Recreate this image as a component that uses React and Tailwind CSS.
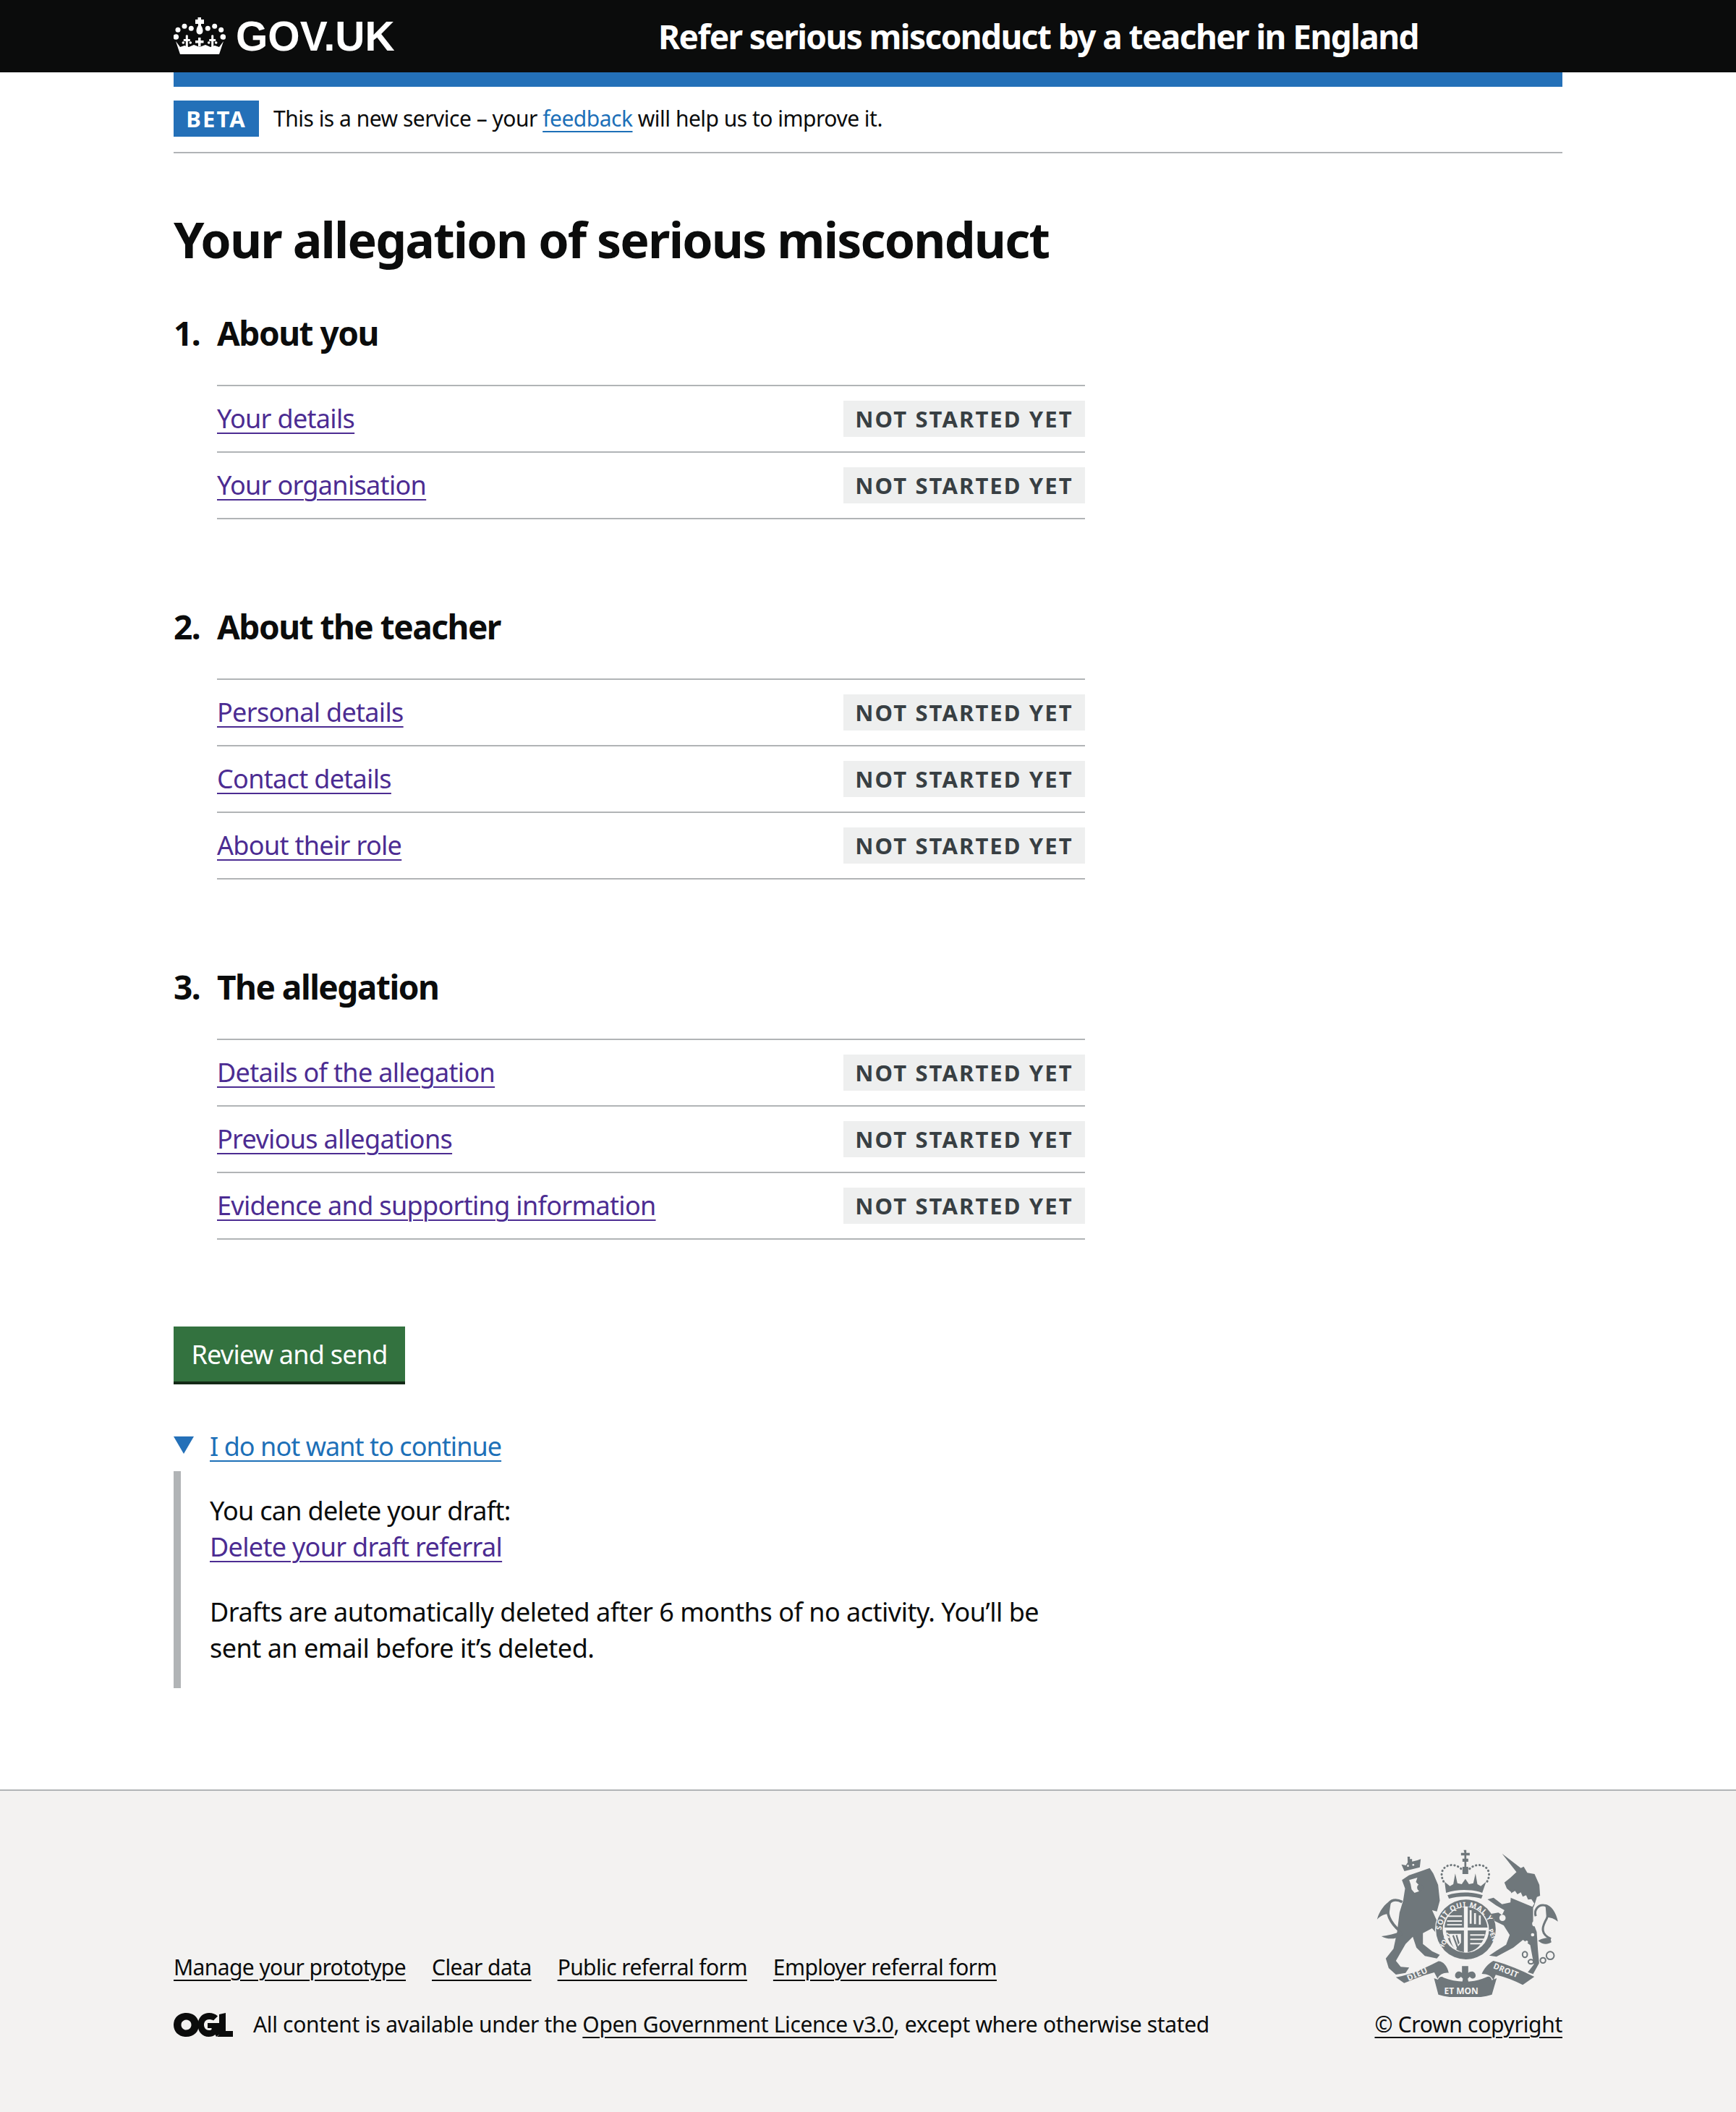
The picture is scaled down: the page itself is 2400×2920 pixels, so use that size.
import React from 'react';

const sections = [
  { num: '1.', title: 'About you', rows: ['Your details', 'Your organisation'] },
  { num: '2.', title: 'About the teacher', rows: ['Personal details', 'Contact details', 'About their role'] },
  { num: '3.', title: 'The allegation', rows: ['Details of the allegation', 'Previous allegations', 'Evidence and supporting information'] },
];

const footerLinks = ['Manage your prototype', 'Clear data', 'Public referral form', 'Employer referral form'];

const linkLine = 'underline decoration-2 underline-offset-[6px]';

const Fleur = ({ x }) => (
  <g transform={`translate(${x} 0)`}>
    <path d="M-1.500 26c1-1 2-1 3 0v5h3v3h-3v8h-3v-8h-3v-3h3z" />
    <circle cx="-5" cy="36" r="1.800" />
    <circle cx="5" cy="36" r="1.800" />
  </g>
);

const Crown = () => (
  <svg viewBox="0 0 72 54" className="w-[72px] h-[54px] shrink-0" fill="#ffffff">
    <path d="M33.500 1h4.500v3h4v6h-4v2.500c1.500 2 2.500 4.500 2.500 7 0 3-2 5-4.500 5s-4.500-2-4.500-5c0-2.500 1-5 2.500-7V10h-4V4h3.500z" />
    <circle cx="24.300" cy="16.300" r="3.500" /><circle cx="47.300" cy="16.300" r="3.500" />
    <circle cx="15" cy="13.300" r="3.500" /><circle cx="56.700" cy="13.300" r="3.500" />
    <circle cx="6" cy="18.300" r="3.500" /><circle cx="65.700" cy="18.300" r="3.500" />
    <circle cx="3.300" cy="28" r="3.800" /><circle cx="68.300" cy="28" r="3.800" />
    <path d="M3 34l6 8 6-2 6 2 7-3 8 3 8-3 7 3 6-2 6 2 6-8-6 18H9z" />
    <Fleur x={18.300} />
    <Fleur x={53.700} />
    <path d="M34 29h3.500v4h4v3.500h-4v5H34v-5h-4V33h4z" />
  </svg>
);

const Ogl = () => (
  <svg viewBox="0 0 82 33" className="w-[82px] h-[33px] shrink-0" fill="#0b0c0c">
    <path fillRule="evenodd" d="M17.500 0C28 0 35 7 35 16.500S28 33 17.500 33 0 26 0 16.500 7 0 17.500 0zm0 9.500c-4 0-7 3-7 7s3 7 7 7 7-3 7-7-3-7-7-7z" />
    <path d="M49 0c5 0 9 1.500 12 4.500l-6 6c-1.500-1-3.500-1.500-6-1.500-4 0-7 3-7 7.500s3 7.500 7 7.500c2 0 3-.500 3.500-1V21H47v-7h16v16l-4 3-1.500-3c-2 2-5 3-9 3-9 0-15-7-15-16.500S40 0 49 0z" />
    <path d="M63 2l9-2v25h10v8H60l3-3z" />
  </svg>
);

const paper = '#f3f2f1';
const armsText = "'Noto Sans',sans-serif";

const CoatOfArms = () => (
  <svg viewBox="70 75 755 615" className="w-[252px] h-[205px] mr-[5px]" fill="#6f777b">
    <defs>
      <path id="ring-top" d="M338 420a102 102 0 0 1 204 0" />
    </defs>

    {/* royal crown */}
    <path d="M431 80h11v12h14v11h-14v13h8v13h-8v21h8v30h-24v-30h8v-21h-8v-13h8v-13h-14V92h14z" />
    <g fill="none" stroke="#6f777b" strokeWidth="9" strokeLinecap="round" strokeDasharray="1 14">
      <path d="M420 158c-25-25-75-20-80 20-1 15 4 28 12 40" />
      <path d="M456 158c25-25 75-20 80 20 1 15-4 28-12 40" />
    </g>
    <path d="M352 212l22 18 14-8 8-44 9 40 18 4 15-22 15 22 18-4 9-40 8 44 14 8 22-18-16 46c-45-16-105-16-150 0z" />
    <path d="M364 268c45-15 100-15 146 0l-6 14c-40-12-94-12-134 0z" />

    {/* lion's crown */}
    <path d="M198 108h10v10h9v10l22-5 14-5-4 34-64 16-12-28 18 4 8-12z" />
    <g fill={paper}><circle cx="200" cy="146" r="4" /><circle cx="222" cy="142" r="4" /></g>

    {/* lion */}
    <path d="M175 205L204 185 254 168 290 155 305 178 325 225 332 290 320 335 300 330 318 370 340 410 330 440 300 405 262 425 262 470 300 500 332 515 320 530 270 520 235 485 220 440 190 470 150 540 170 565 205 568 190 590 150 597 120 570 108 530 140 490 155 420 165 340 180 290 188 240Z" />
    <path d="M205 205l34-10-6 18 14 14-2 25-18 6-12-14-4-22z" fill={paper} />
    <path d="M250 222a12 14 0 1 0 .1 0z" />
    <g fill="none" stroke="#6f777b" strokeWidth="11">
      <path d="M176 296c-25-14-50-10-58 14-8 30 4 70 50 108" />
    </g>
    <path d="M130 290c-25 10-50 45-58 78 18-18 35-24 50-22zM172 418c-25 10-55 18-82 20 25 14 55 14 88-4z" />

    {/* shield and garter */}
    <circle cx="440" cy="410" r="128" fill={paper} />
    <circle cx="440" cy="410" r="124" />
    <circle cx="440" cy="410" r="96" fill={paper} />
    <path d="M352 402c2-42 34-80 80-86v86zM448 316c46 6 78 44 82 86h-82zM358 414h74v90c-40-4-70-44-74-90zM448 414h76c-6 46-36 84-76 90z" />
    <g fill={paper}>
      <path d="M362 352h62v6h-62zM362 372h62v6h-62zM362 388h62v5h-62zM456 330h8v56h-8zM474 342h8v46h-8zM494 352h8v38h-8zM458 430h60v6h-60zM458 448h60v6h-60zM458 466h52v6h-52z" />
      <path d="M372 428h48v36l-22 30c-14-14-24-38-26-66z" />
    </g>
    <path d="M384 436l6-3 20 52-6 4zM398 434l6-2 10 34-6 6z" />
    <text fontFamily={armsText} fontSize="31" fontWeight="700" fill={paper} letterSpacing="2">
      <textPath href="#ring-top" startOffset="2%">SOIT QUI MAL Y</textPath>
    </text>
    <text fontFamily={armsText} fontSize="27" fontWeight="700" fill={paper} transform="rotate(-60 345 470)" x="322" y="480">HONI</text>
    <text fontFamily={armsText} fontSize="27" fontWeight="700" fill={paper} transform="rotate(68 540 430)" x="520" y="430">PENSE</text>
    <g fill={paper}><circle cx="420" cy="538" r="5" /><circle cx="448" cy="540" r="5" /></g>

    {/* unicorn */}
    <path d="M590 95L668 155 680 149 695 175 725 180 745 225 748 270 735 275 724 310 719 320 719 380 734 420 739 495 744 550 719 595 697 587 722 555 707 475 677 453 637 485 567 523 537 518 567 498 607 473 622 433 597 393 560 375 545 345 575 340 590 350 600 330 565 310 530 285 555 278 590 305 625 298 628 255 610 240 600 215 625 195 650 172Z" />
    <path d="M624 262l20-12 10 14 14-8 8 18 14-6 8 18 14-2 12 18-8 14-96-40z" fill={paper} />
    <g fill={paper}><circle cx="604" cy="278" r="11" /><circle cx="592" cy="362" r="13" /><circle cx="726" cy="386" r="11" /><circle cx="717" cy="432" r="7" /><circle cx="692" cy="462" r="6" /></g>
    <g fill="none" stroke="#6f777b" strokeWidth="9">
      <path d="M730 355c-8-24 8-46 30-46 24 0 32 28 8 70-10 20-20 50 25 70" />
    </g>
    <path d="M770 305c25 5 45 35 52 72-14-12-30-18-48-18zM790 445c-20-2-40 4-50 12 20 18 40 16 55 6z" />
    <g fill="none" stroke="#6f777b" strokeWidth="6">
      <ellipse cx="685" cy="514" rx="10" ry="12" /><ellipse cx="710" cy="544" rx="11" ry="9" /><ellipse cx="760" cy="538" rx="11" ry="11" /><ellipse cx="790" cy="518" rx="16" ry="16" />
    </g>

    {/* motto ribbon */}
    <path d="M150 608c60-10 115-35 175-66 18-2 38 18 44 48-20-2-38 6-46 24l-14-26c-50 12-95 34-125 44z" />
    <path d="M308 612l16 6c6-10 14-16 24-8 50 22 126 22 176-2 12-6 20-2 24 12l20-8-20 68c-70 20-150 20-222 0z" />
    <path d="M506 594c10-22 24-40 48-54 60 14 120 42 170 66l-48 34c-35-18-70-32-112-42l-10 22c-8-18-24-26-48-26z" />
    <g fill={paper} fontFamily={armsText} fontWeight="700">
      <text x="202" y="624" fontSize="34" letterSpacing="2" transform="rotate(-24 202 624)">DIEU</text>
      <text x="350" y="678" fontSize="36">ET MON</text>
      <text x="552" y="570" fontSize="33" letterSpacing="1" transform="rotate(22 552 570)">DROIT</text>
    </g>

    {/* fleur */}
    <path d="M424 562h26v28c18-14 34 0 30 16-4 10-16 10-24 0l-8 8 4 20-14 6-14-6 4-20-8-8c-8 10-20 10-24 0-4-16 12-30 28-16z" />
  </svg>
);

const App = () => {
  return (
    <div className="min-h-screen flex flex-col bg-white text-[#0b0c0c] font-['Noto_Sans',sans-serif]">
      <header className="bg-[#0b0c0c] text-white h-[100px]">
        <div className="mx-[240px] h-full flex items-center">
          <div className="w-[670px] flex items-center gap-[14px]">
            <Crown />
            <span className="font-['Liberation_Sans',sans-serif] font-bold text-[57px] leading-none">GOV.UK</span>
          </div>
          <span className="font-bold text-[46px] leading-none tracking-[-1.6px]">Refer serious misconduct by a teacher in England</span>
        </div>
      </header>

      <div className="mx-[240px] flex-1 flex flex-col">
        <div className="h-[20px] bg-[#2470b8]" />
        <div className="h-[92px] border-b-2 border-[#b1b4b6] flex items-center pb-[2px]">
          <strong className="h-[50px] w-[118px] bg-[#2470b8] text-white text-[31px] font-bold tracking-[2.1px] flex items-center justify-center">BETA</strong>
          <p className="ml-[20px] text-[30px] leading-[50px] tracking-[-0.5px]">
            This is a new service – your <a className={`text-[#1d70b8] ${linkLine}`}>feedback</a> will help us to improve it.
          </p>
        </div>

        <h1 className="mt-[69px] h-[100px] font-bold text-[68px] leading-[100px] tracking-[-1.85px]">Your allegation of serious misconduct</h1>

        {sections.map((section, i) => (
          <section key={section.num} className={i === 0 ? 'mt-[56px]' : 'mt-[125px]'}>
            <h2 className="flex h-[50px] font-bold text-[46px] leading-[46px] tracking-[-1.5px]">
              <span className="w-[60px]">{section.num}</span>
              {section.title}
            </h2>
            <ul className="mt-[45px] ml-[60px] w-[1200px] border-t-2 border-[#b1b4b6]">
              {section.rows.map((row) => (
                <li key={row} className="h-[92px] border-b-2 border-[#b1b4b6] flex items-center justify-between">
                  <a className={`text-[36px] leading-[50px] tracking-[-0.68px] text-[#4c2c92] ${linkLine}`}>{row}</a>
                  <strong className="h-[50px] w-[334px] bg-[#eeefef] text-[#383f43] text-[31px] font-bold tracking-[2.1px] flex items-center justify-center">NOT STARTED YET</strong>
                </li>
              ))}
            </ul>
          </section>
        ))}

        <button className="mt-[120px] w-[320px] h-[80px] pt-[2px] bg-[#33723f] border-b-4 border-[#142a17] text-white text-[36px] leading-[50px] tracking-[-0.77px] text-center">Review and send</button>

        <div className="mt-[61px] h-[50px] flex items-center">
          <svg viewBox="0 0 28 24" className="w-[28px] h-[24px] mb-[4px]"><path d="M0 0h28L14 24z" fill="#2470b8" /></svg>
          <a className={`ml-[22px] text-[36px] leading-[50px] tracking-[-0.95px] text-[#1d70b8] ${linkLine}`}>I do not want to continue</a>
        </div>
        <div className="mt-[9px] w-[1260px] border-l-[10px] border-[#b1b4b6] pl-[40px] pt-[30px] pb-[30px] text-[36px] leading-[50px] tracking-[-0.7px]">
          <p>You can delete your draft:</p>
          <a className={`text-[#4c2c92] ${linkLine}`}>Delete your draft referral</a>
          <p className="mt-[40px] w-[1200px] tracking-[-0.5px]">Drafts are automatically deleted after 6 months of no activity. You’ll be sent an email before it’s deleted.</p>
        </div>
      </div>

      <footer className="mt-[140px] h-[446px] border-t-2 border-[#b1b4b6] bg-[#f3f2f1]">
        <div className="mx-[240px] h-full pb-[96px] flex items-end justify-between text-[30px]">
          <div>
            <ul className="flex gap-[36px] leading-[50px] mb-[29px] tracking-[-0.6px]">
              {footerLinks.map((link) => (
                <li key={link}><a className={linkLine}>{link}</a></li>
              ))}
            </ul>
            <div className="flex items-center h-[50px]">
              <Ogl />
              <span className="ml-[28px] leading-[50px] tracking-[-0.34px]">All content is available under the <a className={linkLine}>Open Government Licence v3.0</a>, except where otherwise stated</span>
            </div>
          </div>
          <div className="flex flex-col items-end">
            <CoatOfArms />
            <a className={`mt-[13px] leading-[50px] tracking-[-0.3px] ${linkLine}`}>© Crown copyright</a>
          </div>
        </div>
      </footer>
    </div>
  );
};

export default App;
